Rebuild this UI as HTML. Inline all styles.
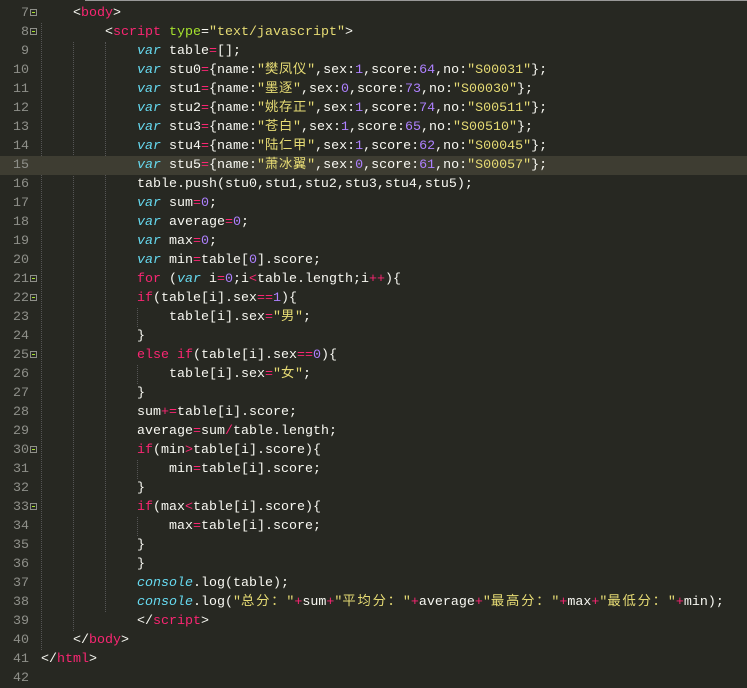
<!DOCTYPE html><html><head><meta charset="utf-8"><style>
body{margin:0;width:747px;height:683px;background:#272822;overflow:hidden;position:relative;font-family:"Liberation Mono","Noto Sans CJK SC",monospace;font-size:13.33px;color:#F8F8F2}
#top{position:absolute;left:85px;top:0;right:0;height:1px;background:#999}
.ln{position:absolute;left:0;width:29px;text-align:right;color:#8F908A}
.cd{position:absolute;left:41px;white-space:pre}
.row{position:absolute;left:0;width:747px;height:19px;line-height:19px}
.hl{background:#3E3D32}
.fm{position:absolute;left:30px;top:5px;width:7px;height:7px;border:1px solid #8F908A;box-sizing:border-box}
.fm:after{content:"";position:absolute;left:1px;top:2px;width:3px;height:1px;background:#A6E22E}
.g{position:absolute;width:0;border-left:1px dotted #555}
.k{color:#F92672}.v{color:#66D9EF;font-style:italic}.s{color:#E6DB74}.n{color:#AE81FF}.a{color:#A6E22E}
.c{letter-spacing:.7px}
.c2{letter-spacing:1.8px}
</style></head><body><div id="top"></div>
<div class="g" style="left:41px;top:23px;height:627px"></div>
<div class="g" style="left:73px;top:42px;height:589px"></div>
<div class="g" style="left:105px;top:42px;height:570px"></div>
<div class="g" style="left:137px;top:308px;height:19px"></div>
<div class="g" style="left:137px;top:365px;height:19px"></div>
<div class="g" style="left:137px;top:460px;height:19px"></div>
<div class="g" style="left:137px;top:517px;height:19px"></div>
<div class="row" style="top:4px"><span class="ln">7</span><span class="fm"></span><span class="cd">    &lt;<span class="k">body</span>&gt;</span></div>
<div class="row" style="top:23px"><span class="ln">8</span><span class="fm"></span><span class="cd">        &lt;<span class="k">script</span> <span class="a">type</span>=<span class="s">"text/javascript"</span>&gt;</span></div>
<div class="row" style="top:42px"><span class="ln">9</span><span class="cd">            <span class="v">var</span> table<span class="k">=</span>[];</span></div>
<div class="row" style="top:61px"><span class="ln">10</span><span class="cd">            <span class="v">var</span> stu0<span class="k">=</span>{name:<span class="s">"<span class="c">樊凤仪</span>"</span>,sex:<span class="n">1</span>,score:<span class="n">64</span>,no:<span class="s">"S00031"</span>};</span></div>
<div class="row" style="top:80px"><span class="ln">11</span><span class="cd">            <span class="v">var</span> stu1<span class="k">=</span>{name:<span class="s">"<span class="c">墨逐</span>"</span>,sex:<span class="n">0</span>,score:<span class="n">73</span>,no:<span class="s">"S00030"</span>};</span></div>
<div class="row" style="top:99px"><span class="ln">12</span><span class="cd">            <span class="v">var</span> stu2<span class="k">=</span>{name:<span class="s">"<span class="c">姚存正</span>"</span>,sex:<span class="n">1</span>,score:<span class="n">74</span>,no:<span class="s">"S00511"</span>};</span></div>
<div class="row" style="top:118px"><span class="ln">13</span><span class="cd">            <span class="v">var</span> stu3<span class="k">=</span>{name:<span class="s">"<span class="c">苍白</span>"</span>,sex:<span class="n">1</span>,score:<span class="n">65</span>,no:<span class="s">"S00510"</span>};</span></div>
<div class="row" style="top:137px"><span class="ln">14</span><span class="cd">            <span class="v">var</span> stu4<span class="k">=</span>{name:<span class="s">"<span class="c">陆仁甲</span>"</span>,sex:<span class="n">1</span>,score:<span class="n">62</span>,no:<span class="s">"S00045"</span>};</span></div>
<div class="row hl" style="top:156px"><span class="ln">15</span><span class="cd">            <span class="v">var</span> stu5<span class="k">=</span>{name:<span class="s">"<span class="c">萧冰翼</span>"</span>,sex:<span class="n">0</span>,score:<span class="n">61</span>,no:<span class="s">"S00057"</span>};</span></div>
<div class="row" style="top:175px"><span class="ln">16</span><span class="cd">            table.push(stu0,stu1,stu2,stu3,stu4,stu5);</span></div>
<div class="row" style="top:194px"><span class="ln">17</span><span class="cd">            <span class="v">var</span> sum<span class="k">=</span><span class="n">0</span>;</span></div>
<div class="row" style="top:213px"><span class="ln">18</span><span class="cd">            <span class="v">var</span> average<span class="k">=</span><span class="n">0</span>;</span></div>
<div class="row" style="top:232px"><span class="ln">19</span><span class="cd">            <span class="v">var</span> max<span class="k">=</span><span class="n">0</span>;</span></div>
<div class="row" style="top:251px"><span class="ln">20</span><span class="cd">            <span class="v">var</span> min<span class="k">=</span>table[<span class="n">0</span>].score;</span></div>
<div class="row" style="top:270px"><span class="ln">21</span><span class="fm"></span><span class="cd">            <span class="k">for</span> (<span class="v">var</span> i<span class="k">=</span><span class="n">0</span>;i<span class="k">&lt;</span>table.length;i<span class="k">++</span>){</span></div>
<div class="row" style="top:289px"><span class="ln">22</span><span class="fm"></span><span class="cd">            <span class="k">if</span>(table[i].sex<span class="k">==</span><span class="n">1</span>){</span></div>
<div class="row" style="top:308px"><span class="ln">23</span><span class="cd">                table[i].sex<span class="k">=</span><span class="s">"<span class="c">男</span>"</span>;</span></div>
<div class="row" style="top:327px"><span class="ln">24</span><span class="cd">            }</span></div>
<div class="row" style="top:346px"><span class="ln">25</span><span class="fm"></span><span class="cd">            <span class="k">else</span> <span class="k">if</span>(table[i].sex<span class="k">==</span><span class="n">0</span>){</span></div>
<div class="row" style="top:365px"><span class="ln">26</span><span class="cd">                table[i].sex<span class="k">=</span><span class="s">"<span class="c">女</span>"</span>;</span></div>
<div class="row" style="top:384px"><span class="ln">27</span><span class="cd">            }</span></div>
<div class="row" style="top:403px"><span class="ln">28</span><span class="cd">            sum<span class="k">+=</span>table[i].score;</span></div>
<div class="row" style="top:422px"><span class="ln">29</span><span class="cd">            average<span class="k">=</span>sum<span class="k">/</span>table.length;</span></div>
<div class="row" style="top:441px"><span class="ln">30</span><span class="fm"></span><span class="cd">            <span class="k">if</span>(min<span class="k">&gt;</span>table[i].score){</span></div>
<div class="row" style="top:460px"><span class="ln">31</span><span class="cd">                min<span class="k">=</span>table[i].score;</span></div>
<div class="row" style="top:479px"><span class="ln">32</span><span class="cd">            }</span></div>
<div class="row" style="top:498px"><span class="ln">33</span><span class="fm"></span><span class="cd">            <span class="k">if</span>(max<span class="k">&lt;</span>table[i].score){</span></div>
<div class="row" style="top:517px"><span class="ln">34</span><span class="cd">                max<span class="k">=</span>table[i].score;</span></div>
<div class="row" style="top:536px"><span class="ln">35</span><span class="cd">            }</span></div>
<div class="row" style="top:555px"><span class="ln">36</span><span class="cd">            }</span></div>
<div class="row" style="top:574px"><span class="ln">37</span><span class="cd">            <span class="v">console</span>.log(table);</span></div>
<div class="row" style="top:593px"><span class="ln">38</span><span class="cd">            <span class="v">console</span>.log(<span class="s">"<span class="c2">总分：</span>"</span><span class="k">+</span>sum<span class="k">+</span><span class="s">"<span class="c2">平均分：</span>"</span><span class="k">+</span>average<span class="k">+</span><span class="s">"<span class="c2">最高分：</span>"</span><span class="k">+</span>max<span class="k">+</span><span class="s">"<span class="c2">最低分：</span>"</span><span class="k">+</span>min);</span></div>
<div class="row" style="top:612px"><span class="ln">39</span><span class="cd">            &lt;/<span class="k">script</span>&gt;</span></div>
<div class="row" style="top:631px"><span class="ln">40</span><span class="cd">    &lt;/<span class="k">body</span>&gt;</span></div>
<div class="row" style="top:650px"><span class="ln">41</span><span class="cd">&lt;/<span class="k">html</span>&gt;</span></div>
<div class="row" style="top:669px"><span class="ln">42</span></div>
</body></html>
